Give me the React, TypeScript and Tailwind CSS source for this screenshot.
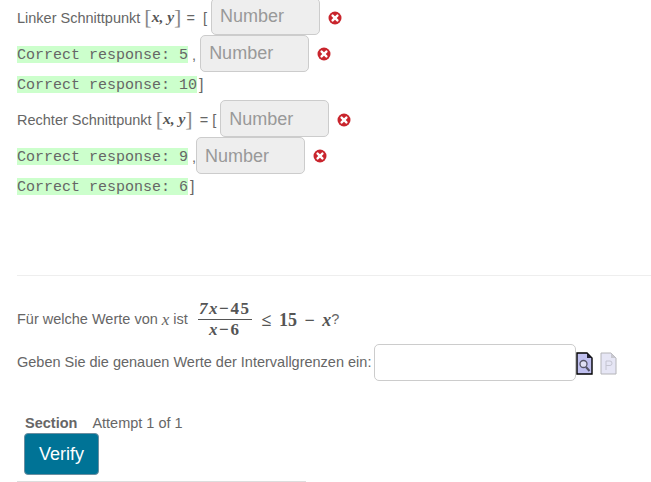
const sans = "font-['Liberation_Sans',Arial,sans-serif]";
const serif = "font-['Liberation_Serif','Times_New_Roman',serif]";

function XIcon() {
  return (
    <svg width="14" height="14" viewBox="0 0 14 14" className="shrink-0">
      <circle cx="7" cy="7" r="6.5" fill="#c9252d" />
      <path d="M4.6 4.6 9.4 9.4M9.4 4.6 4.6 9.4" stroke="#fff" strokeWidth="2.4" strokeLinecap="round" />
    </svg>
  );
}

function NumberBox({ low }: { low?: boolean }) {
  return (
    <span className={`w-[109px] h-[37px] shrink-0 rounded-[5px] border border-[#cccccc] bg-[#eeeeee] pl-[8px] text-[18px] ${low ? "leading-[37px]" : "leading-[35px]"} text-[#999999]`}>
      Number
    </span>
  );
}

function Answer({ children }: { children: string }) {
  return (
    <span className="h-[17px] bg-[#ccffcc] font-['Liberation_Mono','Courier_New',monospace] text-[15px] leading-[19px] text-[#666666]">
      {children}
    </span>
  );
}

function Coord() {
  return (
    <span className={`${serif} inline-flex items-center text-[#555]`}>
      <span className="text-[22px] leading-none text-[#888888]">[</span>
      <span className="text-[15.5px] font-bold italic">x, y</span>
      <span className="text-[22px] leading-none text-[#888888]">]</span>
    </span>
  );
}

function DocIcon({ faded }: { faded?: boolean }) {
  const stroke = faded ? "#b4b4b8" : "#000";
  const fill = faded ? "#e6e6f5" : "#c0c0f0";
  return (
    <svg width="17" height="23" viewBox="0 0 17 23" className="shrink-0">
      <path d="M1 1H11L16 6V22H1Z" fill={fill} stroke={stroke} strokeWidth={faded ? 1 : 1.4} />
      <path d="M11 1V6H16Z" fill={faded ? "#c8c8d0" : "#223"} />
      {faded ? (
        <path d="M6 18V9H10Q12 9 12 11.2T10 13.5H6" fill="none" stroke="#c4c4d0" strokeWidth="1" />
      ) : (
        <g fill="none" stroke="#555566">
          <circle cx="7.5" cy="12" r="3.5" fill="#e0e0f4" strokeWidth="1.3" />
          <path d="M10 15 13.5 19" strokeWidth="2" />
        </g>
      )}
    </svg>
  );
}

export default function App() {
  return (
    <div className={`${sans} h-[482px] w-[651px] overflow-hidden bg-white pl-[17px] text-[14.5px] text-[#666666]`}>
      <div className="mt-[-2px]">
        <div className="flex h-[37px] items-center">
          <span className="mt-[4px]">Linker Schnittpunkt&nbsp;</span>
          <Coord />
          <span className="ml-[1px] mt-[4px]">&nbsp;=&nbsp;&nbsp;[&nbsp;</span>
          <NumberBox />
          <span className="ml-2 mt-[2px]"><XIcon /></span>
        </div>
        <div className="flex h-[37px] items-center">
          <span className="mt-[2px] flex"><Answer>Correct response: 5</Answer></span>
          <span className="mt-1">&nbsp;,&nbsp;</span>
          <NumberBox />
          <span className="ml-2"><XIcon /></span>
        </div>
        <div className="flex h-[21px] items-end">
          <Answer>Correct response: 10</Answer>
          <span className="ml-[2px] text-[16px] leading-[17px]">]</span>
        </div>
        <div className="mt-[7px] flex h-[37px] items-center">
          <span className="mt-[4px]">Rechter Schnittpunkt&nbsp;</span>
          <Coord />
          <span className="ml-[3px] mt-[4px]">&nbsp;=&nbsp;[&nbsp;</span>
          <NumberBox low />
          <span className="ml-2 mt-[2px]"><XIcon /></span>
        </div>
        <div className="flex h-[37px] items-center">
          <span className="mt-[2px] flex"><Answer>Correct response: 9</Answer></span>
          <span className="mt-1">&nbsp;,</span>
          <NumberBox low />
          <span className="ml-2"><XIcon /></span>
        </div>
        <div className="flex h-[21px] items-end">
          <Answer>Correct response: 6</Answer>
          <span className="ml-[2px] text-[16px] leading-[17px]">]</span>
        </div>
      </div>

      <div className="mt-[80px] h-px bg-[#eeeeee]" />

      <div className="mt-[23px] flex h-[40px] items-center">
        <span className="mt-[2px]">Für welche Werte von&nbsp;</span>
        <span className={`${serif} mt-[2px] text-[17px] italic`}>x</span>
        <span className="mt-[2px]">&nbsp;ist&nbsp;</span>
        <span className={`${serif} ml-[6px] inline-flex flex-col items-center text-[#555] text-[17px] font-bold leading-[18px]`}>
          <span className="border-b border-[#555] px-[1px] pb-[1px] tracking-[1.6px]"><i>7x</i>−45</span>
          <span className="pt-[1px] tracking-[1.6px]"><i>x</i>−6</span>
        </span>
        <span className={`${serif} ml-[10px] mt-[2px] text-[18px] font-bold text-[#555] [word-spacing:3px]`}>≤ 15 − <i>x</i></span>
        <span className="mt-[2px]">?</span>
      </div>

      <div className="mt-[4px] flex h-[38px] items-center">
        <span className="mt-[2px]">Geben Sie die genauen Werte der Intervallgrenzen ein:&nbsp;</span>
        <span className="ml-[-1px] h-[37px] w-[202px] shrink-0 rounded-[5px] border border-[#cccccc] bg-white" />
        <span className="mt-[2px] flex"><DocIcon /></span>
        <span className="ml-[7px] mt-[2px] flex"><DocIcon faded /></span>
      </div>

      <div className="mt-[35px] ml-[8px] flex h-[16px] items-center">
        <span className="font-bold">Section</span>
        <span className="ml-[15px]">Attempt 1 of 1</span>
      </div>
      <div className="ml-[7px] mt-[1px] flex h-[42px] w-[75px] items-center justify-center rounded-[4px] border border-[#6b8ea0] bg-[#007396] text-[18px] text-white">
        Verify
      </div>
      <div className="mt-[6px] h-px w-[289px] bg-[#dddddd]" />
    </div>
  );
}
